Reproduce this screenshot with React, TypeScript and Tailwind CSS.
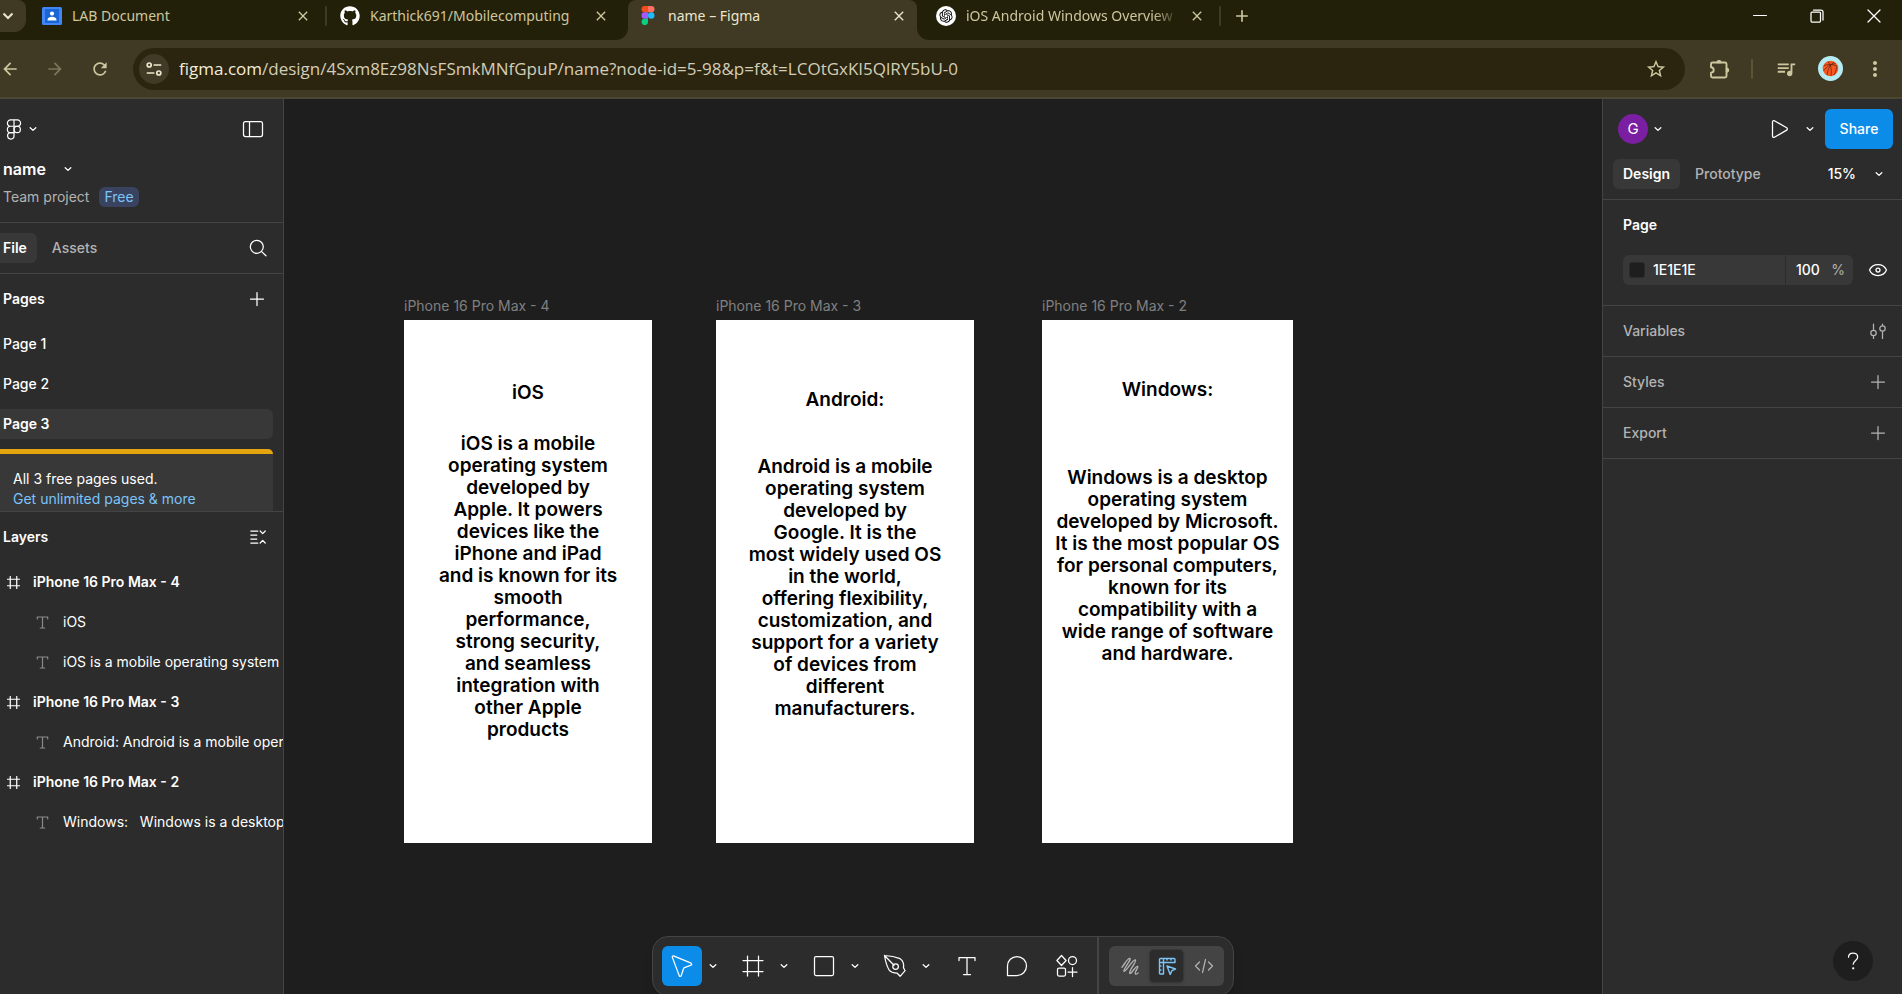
import type { ReactNode } from "react";
import {
  MdAdd,
  MdArrowBack,
  MdArrowForward,
  MdClose,
  MdMoreVert,
  MdQueueMusic,
  MdRefresh,
  MdStarBorder,
} from "react-icons/md";
import { FaGithub } from "react-icons/fa";
import { RiOpenaiFill } from "react-icons/ri";

/* ---------- icons ---------- */

function Icon({
  children,
  className = "size-6",
  box = 24,
}: {
  children: ReactNode;
  className?: string;
  box?: number;
}) {
  return (
    <svg
      viewBox={`0 0 ${box} ${box}`}
      className={`shrink-0 ${className}`}
      fill="none"
      stroke="currentColor"
      strokeWidth="1.25"
      strokeLinecap="round"
      strokeLinejoin="round"
      aria-hidden="true"
    >
      {children}
    </svg>
  );
}

const Chevron = () => (
  <Icon box={10} className="size-[10px]">
    <path d="M2.200 3.700 5 6.400l2.800-2.700" strokeWidth="1.3" />
  </Icon>
);

const Plus = () => (
  <Icon box={16} className="size-4">
    <path d="M8 1.5v13M1.5 8h13" />
  </Icon>
);

const TypeIcon = ({ className, weight = 1.25 }: { className: string; weight?: number }) => (
  <Icon box={20} className={className}>
    <path d="M2 4.5V1.5h16v3M10 1.5v17M6.5 18.5h7" strokeWidth={weight} />
  </Icon>
);

const HashFrame = ({ className }: { className: string }) => (
  <Icon box={20} className={className}>
    <path d="M5 .8v18.4M15 .8v18.4M.8 5h18.4M.8 15h18.4" strokeWidth="1.9" />
  </Icon>
);

const FigmaColor = () => (
  <svg viewBox="0 0 14 20" className="h-[19px] w-[14px]" aria-hidden="true">
    <path d="M3.5 0H7v6.6H3.5a3.3 3.3 0 0 1 0-6.6z" fill="#f24e1e" />
    <path d="M7 0h3.5a3.3 3.3 0 0 1 0 6.6H7z" fill="#ff7262" />
    <path d="M3.5 6.6H7v6.7H3.5a3.3 3.3 0 0 1 0-6.7z" fill="#a259ff" />
    <circle cx="10.4" cy="10" r="3.4" fill="#1abcfe" />
    <path d="M3.5 13.3H7v3.3a3.4 3.4 0 1 1-3.5-3.3z" fill="#0acf83" />
  </svg>
);

const FigmaOutline = () => (
  <svg
    viewBox="0 0 16 22"
    className="h-[21px] w-4"
    fill="none"
    stroke="currentColor"
    strokeWidth="1.25"
    aria-hidden="true"
  >
    <path d="M8 1H4.4a3.3 3.3 0 0 0 0 6.6H8zM8 1h3.6a3.3 3.3 0 0 1 0 6.6H8zM8 7.6H4.4a3.3 3.3 0 0 0 0 6.7H8z" />
    <circle cx="11.4" cy="10.9" r="3.3" />
    <path d="M8 14.3H4.4a3.35 3.35 0 1 0 3.6 3.3z" />
  </svg>
);

const ContactsIcon = () => (
  <svg viewBox="0 0 20 20" className="size-5" aria-hidden="true">
    <rect width="20" height="18" y="1" rx="1.5" fill="#4285f4" />
    <rect x="3" y="3" width="14" height="14" fill="#1a66d6" />
    <circle cx="10" cy="7.6" r="2.1" fill="#fff" />
    <path d="M5.6 14.4v-1c0-1.7 2.4-2.6 4.4-2.6s4.4.9 4.4 2.6v1z" fill="#fff" />
  </svg>
);

const OpenAiBadge = () => (
  <span className="flex size-5 items-center justify-center rounded-full bg-white text-black">
    <RiOpenaiFill className="size-4" />
  </span>
);

const SiteSettings = () => (
  <Icon box={16} className="size-4">
    <g strokeWidth="1.7">
      <circle cx="3.2" cy="4" r="2" />
      <path d="M8.2 4h6.4M1.4 12h6.4" />
      <circle cx="12.8" cy="12" r="2" />
    </g>
  </Icon>
);

const Puzzle = () => (
  <Icon box={22} className="size-[22px]">
    <path
      d="M3.500 4.500h12.500a1.500 1.500 0 0 1 1.500 1.500v12a1.500 1.500 0 0 1-1.500 1.500H3.500A1.500 1.500 0 0 1 2 18v-3.300c3.600-.2 3.600-5.200 0-5.400V6a1.500 1.500 0 0 1 1.500-1.500z"
      strokeWidth="1.9"
    />
    <path d="M8 4.500a2 2 0 0 1 4 0zM17.500 10a2 2 0 0 1 0 4z" fill="currentColor" />
  </Icon>
);

const Basketball = () => (
  <svg viewBox="0 0 25 25" className="size-[25px]" aria-hidden="true">
    <circle cx="12.500" cy="12.500" r="12.500" fill="#b5ecf3" />
    <circle cx="12.500" cy="12.500" r="7.800" fill="#f9571f" />
    <path
      d="M6 9.500c4.500-1.500 9-1.200 13 .5M10 5.500c3 3 4 9 3 14.500M5.500 15c3-4.500 7.500-7 12-7.500M9 19c.5-5.500 3-10 7-13M16 19c1.500-2.500 2.500-5.500 2.500-8.500"
      fill="none"
      stroke="#5a2413"
      strokeWidth=".7"
    />
  </svg>
);

/* ---------- browser chrome ---------- */

function Tab({
  icon,
  label,
  active = false,
  fade = false,
}: {
  icon: ReactNode;
  label: string;
  active?: boolean;
  fade?: boolean;
}) {
  return (
    <div
      className={`relative flex h-10 w-[289px] min-w-0 items-center gap-[10px] px-[10px] pb-[9px] ${
        active ? "rounded-t-lg bg-[#403a24] text-[#ece6cc]" : "text-[#cdc69f]"
      }`}
    >
      {active && (
        <>
          <svg viewBox="0 0 12 12" className="absolute right-full bottom-0 size-3 text-[#403a24]" aria-hidden="true">
            <path d="M12 0v12H0A12 12 0 0 0 12 0z" fill="currentColor" />
          </svg>
          <svg viewBox="0 0 12 12" className="absolute bottom-0 left-full size-3 text-[#403a24]" aria-hidden="true">
            <path d="M0 0v12h12A12 12 0 0 1 0 0z" fill="currentColor" />
          </svg>
        </>
      )}
      <span className="flex size-5 shrink-0 items-center justify-center">{icon}</span>
      <span
        className={`min-w-0 flex-1 overflow-hidden text-[14px] leading-5 whitespace-nowrap ${
          fade ? "[mask-image:linear-gradient(to_right,#000_88%,transparent)]" : ""
        }`}
      >
        {label}
      </span>
      <button aria-label={`Close ${label}`} className="shrink-0">
        <MdClose className="size-4" />
      </button>
    </div>
  );
}

const TabGap = ({ line = false }: { line?: boolean }) => (
  <span className="flex h-[31px] w-[9px] shrink-0 items-center justify-center">
    {line && <span className="h-5 w-[2px] rounded bg-[#403a24]" />}
  </span>
);

function TitleBar() {
  return (
    <div className="flex h-10 shrink-0 items-start bg-[#232009] font-['Noto_Sans',sans-serif]">
      <button
        aria-label="Search tabs"
        className="mr-[6px] flex h-8 w-[26px] shrink-0 items-center rounded-tr-lg rounded-br-xl bg-[#403a24] pl-[2px] text-[#ece6cc]"
      >
        <svg viewBox="0 0 12 12" className="size-3" fill="none" stroke="currentColor" strokeWidth="2" aria-hidden="true">
          <path d="M1.500 3.500 6 8l4.500-4.500" />
        </svg>
      </button>
      <Tab icon={<ContactsIcon />} label="LAB Document" />
      <TabGap line />
      <Tab icon={<FaGithub className="size-5 text-white" />} label="Karthick691/Mobilecomputing" />
      <TabGap />
      <Tab icon={<FigmaColor />} label="name – Figma" active />
      <TabGap />
      <Tab icon={<OpenAiBadge />} label="iOS Android Windows Overview" fade />
      <TabGap line />
      <button aria-label="New tab" className="ml-2 flex h-[31px] items-center text-[#cdc69f]">
        <MdAdd className="size-5" />
      </button>
      <div className="ml-auto flex h-[31px] shrink-0 items-center gap-[43px] pr-[21px] text-white">
        <button aria-label="Minimize">
          <Icon box={14} className="size-[14px]">
            <path d="M.5 6.500h13" strokeWidth="1" />
          </Icon>
        </button>
        <button aria-label="Restore">
          <Icon box={14} className="size-[14px]">
            <rect x="1" y="3" width="9.500" height="10" rx="1" />
            <path d="M3.500 1h7.500a2 2 0 0 1 2 2v8" />
          </Icon>
        </button>
        <button aria-label="Close window">
          <Icon box={14} className="size-[14px]">
            <path d="m1 1 12 12M13 1 1 13" />
          </Icon>
        </button>
      </div>
    </div>
  );
}

function AddressBar() {
  return (
    <div className="flex h-[59px] shrink-0 items-center border-b-2 border-[#4b4735] bg-[#403a24] pr-[15px] text-[#cdc69f]">
      <div className="flex shrink-0 gap-[25px]">
        <button aria-label="Back">
          <MdArrowBack className="size-5" />
        </button>
        <button aria-label="Forward" className="text-[#7d765a]" disabled>
          <MdArrowForward className="size-5" />
        </button>
        <button aria-label="Reload">
          <MdRefresh className="size-5" />
        </button>
      </div>
      <div className="ml-[23px] flex h-[42px] min-w-0 flex-1 items-center rounded-full bg-[#2b2510] pr-[18px] pl-[6px]">
        <button
          aria-label="Site information"
          className="flex size-[30px] shrink-0 items-center justify-center rounded-full bg-[#403a26] text-[#ece6cc]"
        >
          <SiteSettings />
        </button>
        <div className="ml-[10px] min-w-0 flex-1 truncate pt-px text-[17px] leading-6 text-[#d3cdb5]">
          <span className="text-[#f1edda]">figma.com</span>
          /design/4Sxm8Ez98NsFSmkMNfGpuP/name?node-id=5-98&amp;p=f&amp;t=LCOtGxKI5QlRY5bU-0
        </div>
        <button aria-label="Bookmark this tab">
          <MdStarBorder className="size-[22px]" />
        </button>
      </div>
      <button aria-label="Extensions" className="ml-6 shrink-0">
        <Puzzle />
      </button>
      <span className="ml-5 h-5 w-[2px] shrink-0 rounded bg-[#5b5436]" />
      <button aria-label="Media controls" className="ml-[22px] shrink-0">
        <MdQueueMusic className="size-[22px]" />
      </button>
      <button aria-label="Profile" className="ml-[21px] shrink-0">
        <Basketball />
      </button>
      <button aria-label="Browser menu" className="ml-5 shrink-0">
        <MdMoreVert className="size-6" />
      </button>
    </div>
  );
}

/* ---------- left panel ---------- */

const layers = [
  { kind: "frame", name: "iPhone 16 Pro Max - 4" },
  { kind: "text", name: "iOS" },
  { kind: "text", name: "iOS is a mobile operating system developed by Apple." },
  { kind: "frame", name: "iPhone 16 Pro Max - 3" },
  { kind: "text", name: "Android: Android is a mobile operating system" },
  { kind: "frame", name: "iPhone 16 Pro Max - 2" },
  { kind: "text", name: "Windows:   Windows is a desktop operating system" },
];

function LeftPanel() {
  return (
    <aside className="w-[284px] shrink-0 overflow-hidden border-r border-[#444444] bg-[#2c2c2c] text-[14px] leading-5 text-white">
      <header className="border-b border-[#444444] pt-[14px] pb-[15px] pl-[3px]">
        <div className="flex h-8 items-center pr-[19px] pl-[3px]">
          <button aria-label="Main menu" className="flex items-center gap-[6px]">
            <FigmaOutline />
            <Chevron />
          </button>
          <button aria-label="Minimize UI" className="ml-auto">
            <Icon box={22} className="size-[22px]">
              <rect x="1.500" y="3.500" width="19" height="15" rx="2" />
              <path d="M7.500 3.500v15" />
            </Icon>
          </button>
        </div>
        <button className="mt-2 flex h-8 items-center gap-[17px] text-[16px] font-semibold">
          name
          <Chevron />
        </button>
        <div className="mt-[2px] flex h-5 items-center gap-[10px] text-[#b3b3b3]">
          Team project
          <span className="rounded-[6px] bg-[#394360] px-[5px] text-[#7cc4f8]">Free</span>
        </div>
      </header>

      <div className="flex h-[51px] items-center border-b border-[#444444] pr-4">
        <button className="h-[30px] rounded-r-[6px] bg-[#383838] pr-[10px] pl-[3px] font-semibold">File</button>
        <button className="ml-[15px] font-medium text-[#b3b3b3]">Assets</button>
        <button aria-label="Find" className="ml-auto">
          <Icon box={18} className="size-[18px]">
            <circle cx="7.800" cy="7.800" r="6.500" />
            <path d="m12.600 12.600 4.400 4.200" />
          </Icon>
        </button>
      </div>

      <section className="border-b border-[#444444] pr-[10px]">
        <div className="flex h-[50px] items-center pr-2 pl-[3px]">
          <h2 className="font-semibold">Pages</h2>
          <button aria-label="Add new page" className="ml-auto">
            <Plus />
          </button>
        </div>
        <ul className="flex flex-col gap-[10px] pt-[5px]">
          {["Page 1", "Page 2", "Page 3"].map((page) => (
            <li
              key={page}
              className={`flex h-[30px] items-center pl-[3px] ${
                page === "Page 3" ? "rounded-r-[6px] bg-[#383838] font-semibold" : "font-medium"
              }`}
            >
              {page}
            </li>
          ))}
        </ul>
        <div className="mt-[10px] overflow-hidden rounded-tr-[5px] border-t-[5px] border-[#e5a50f] bg-[#383838] pt-[15px] pb-[2px] pl-[13px]">
          <p>All 3 free pages used.</p>
          <a href="#upgrade" className="block text-[#7cc4f8]">
            Get unlimited pages &amp; more
          </a>
        </div>
      </section>

      <section>
        <div className="flex h-[50px] items-center pr-[17px] pl-[3px]">
          <h2 className="font-semibold">Layers</h2>
          <button aria-label="Collapse layers" className="ml-auto">
            <Icon box={16} className="size-4">
              <path d="M.8 2h7M.8 6h6M.8 10h6M.8 14h7M10.200 2 12.700 4.600 15.200 2M10.200 14l2.500-2.600 2.500 2.600" />
            </Icon>
          </button>
        </div>
        <ul>
          {layers.map((layer) =>
            layer.kind === "frame" ? (
              <li key={layer.name} className="flex h-10 items-center gap-[13px] pl-[7px] font-semibold whitespace-pre">
                <HashFrame className="size-[13px]" />
                {layer.name}
              </li>
            ) : (
              <li key={layer.name} className="flex h-10 items-center gap-[14px] pl-[36px] whitespace-pre">
                <TypeIcon className="size-[13px] text-[#8c8c8c]" weight={1.8} />
                {layer.name}
              </li>
            ),
          )}
        </ul>
      </section>
    </aside>
  );
}

/* ---------- canvas ---------- */

function Artboard({
  name,
  title,
  lines,
  place,
  titleSpace,
  bodySpace,
}: {
  name: string;
  title: string;
  lines: string[];
  place: string;
  titleSpace: string;
  bodySpace: string;
}) {
  return (
    <figure className={`absolute top-[197px] ${place}`}>
      <figcaption className="h-6 text-[14px] leading-5 whitespace-nowrap text-[#808080]">{name}</figcaption>
      <div
        className={`h-[523px] bg-white text-center text-[19px] leading-[22px] font-semibold whitespace-nowrap text-black ${titleSpace}`}
      >
        <h3>{title}</h3>
        <p className={bodySpace}>
          {lines.map((line) => (
            <span key={line} className="block">
              {line}
            </span>
          ))}
        </p>
      </div>
    </figure>
  );
}

function Tool({
  label,
  menu = false,
  active = false,
  children,
}: {
  label: string;
  menu?: boolean;
  active?: boolean;
  children: ReactNode;
}) {
  return (
    <div className="flex items-center">
      <button
        aria-label={label}
        className={`flex size-10 items-center justify-center rounded-[6px] ${active ? "bg-[#0c8ce9]" : ""}`}
      >
        {children}
      </button>
      {menu && (
        <button aria-label={`${label} options`} className="flex h-10 w-[22px] items-center justify-center">
          <Chevron />
        </button>
      )}
    </div>
  );
}

function Toolbar() {
  return (
    <div className="absolute -bottom-[2px] left-1/2 flex h-[60px] -translate-x-1/2 items-center rounded-2xl border border-[#444444] bg-[#2c2c2c] px-[9px] text-white shadow-lg">
      <div className="flex gap-[9px]">
        <Tool label="Move" menu active>
          <Icon>
            <path d="M2.300 3.100c-.3-.8.4-1.500 1.200-1.200l17.600 7.300c.9.400.8 1.600 0 1.900l-6.600 2.500a1.500 1.500 0 0 0-.9.900l-2.400 7.300c-.3.900-1.500.9-1.900.1z" />
          </Icon>
        </Tool>
        <Tool label="Frame" menu>
          <Icon>
            <path d="M6.500 2v20M17.500 2v20M2 6.500h20M2 17.500h20" />
          </Icon>
        </Tool>
        <Tool label="Rectangle" menu>
          <Icon>
            <rect x="2.500" y="2.500" width="19" height="19" rx="1.500" />
          </Icon>
        </Tool>
        <Tool label="Pen" menu>
          <Icon>
            <path d="M1.500 1.500 11 11.300M1.500 1.500c1 6 2.300 10.500 4.500 14.300 1.500 2 5 3.200 8.200 3.400l2.900 3.100 5-5.600-1.600-3c.6-3.800-.8-7.200-3.400-9C12.500 2.800 7.500 1.800 1.500 1.500z" />
            <circle cx="12.600" cy="12.600" r="2.800" />
          </Icon>
        </Tool>
      </div>
      <div className="ml-[10px] flex gap-[10px]">
        <Tool label="Text">
          <TypeIcon className="size-5" />
        </Tool>
        <Tool label="Comment">
          <Icon>
            <path d="M2.500 21.500V12A9.500 9.500 0 1 1 12 21.500z" />
          </Icon>
        </Tool>
        <Tool label="Actions">
          <Icon>
            <path d="m6.500 1.500 4.600 5-4.600 5-4.600-5zM17.500 13.500v9M13 18h9" />
            <circle cx="17.500" cy="6.500" r="4" />
            <rect x="2.500" y="14" width="8" height="8" rx="1.500" />
          </Icon>
        </Tool>
      </div>
      <span className="mx-[10px] h-full w-[2px] bg-[#444444]" />
      <div className="flex h-10 w-[115px] items-center justify-between rounded-[6px] bg-[#444444] px-[3px] text-[#b3b3b3]">
        <button aria-label="Draw" className="flex h-[34px] w-[35px] items-center justify-center">
          <Icon box={20} className="size-[18px]">
            <path
              d="M1 11.500C4 8 7 1.500 9.800 1.600c2.200.8-6.500 10.400-6.600 14.200 2.500 1.600 9.500-13.500 12.800-12.600 2 1.700-7 11-6.400 14.800 2 1.800 6.400-8.500 8.900-7.600 1.300 1.300-3.700 5.700-2.500 8.300 1 .6 2.300-.2 3-1"
              strokeWidth="1.5"
            />
          </Icon>
        </button>
        <button
          aria-label="Design"
          className="flex h-[34px] w-[35px] items-center justify-center rounded-[5px] border border-[#383838] bg-[#2c2c2c] text-[#7cc4f8] shadow"
        >
          <Icon box={20} className="size-5">
            <path
              d="M6.500 18h-3a1 1 0 0 1-1-1v-13.500a1 1 0 0 1 1-1h13.500a1 1 0 0 1 1 1v3H6.500zM6.500 2.500v4h-4M10 2.500v1.500M14 2.500v1.500M2.500 10h1.500M2.500 14h1.500"
              strokeWidth="1.4"
            />
            <path d="m10 10 8.500 3-3.600 1.700-1.700 3.700z" strokeWidth="1.4" />
          </Icon>
        </button>
        <button aria-label="Dev Mode" className="flex h-[34px] w-[35px] items-center justify-center">
          <Icon box={20} className="size-5">
            <path d="M5.500 6 1.500 10l4 4M14.500 6l4 4-4 4M11.500 3.500l-3 13" />
          </Icon>
        </button>
      </div>
    </div>
  );
}

function Canvas() {
  return (
    <main className="relative min-w-0 flex-1 overflow-hidden bg-[#1e1e1e]">
      <Artboard
        name="iPhone 16 Pro Max - 4"
        title="iOS"
        place="left-[120px] w-[248px]"
        titleSpace="pt-[62px]"
        bodySpace="mt-[29px]"
        lines={[
          "iOS is a mobile",
          "operating system",
          "developed by",
          "Apple. It powers",
          "devices like the",
          "iPhone and iPad",
          "and is known for its",
          "smooth",
          "performance,",
          "strong security,",
          "and seamless",
          "integration with",
          "other Apple",
          "products",
        ]}
      />
      <Artboard
        name="iPhone 16 Pro Max - 3"
        title="Android:"
        place="left-[432px] w-[258px]"
        titleSpace="pt-[69px]"
        bodySpace="mt-[45px]"
        lines={[
          "Android is a mobile",
          "operating system",
          "developed by",
          "Google. It is the",
          "most widely used OS",
          "in the world,",
          "offering flexibility,",
          "customization, and",
          "support for a variety",
          "of devices from",
          "different",
          "manufacturers.",
        ]}
      />
      <Artboard
        name="iPhone 16 Pro Max - 2"
        title="Windows:"
        place="left-[758px] w-[251px]"
        titleSpace="pt-[59px]"
        bodySpace="mt-[66px]"
        lines={[
          "Windows is a desktop",
          "operating system",
          "developed by Microsoft.",
          "It is the most popular OS",
          "for personal computers,",
          "known for its",
          "compatibility with a",
          "wide range of software",
          "and hardware.",
        ]}
      />
      <Toolbar />
    </main>
  );
}

/* ---------- right panel ---------- */

function PanelRow({ label, children }: { label: string; children: ReactNode }) {
  return (
    <div className="flex h-[51px] items-center border-b border-[#444444] pr-4 pl-5 font-medium text-[#b3b3b3]">
      <h2>{label}</h2>
      <button aria-label={`Edit ${label}`} className="ml-auto">
        {children}
      </button>
    </div>
  );
}

function RightPanel() {
  return (
    <aside className="relative w-[300px] shrink-0 border-l border-[#444444] bg-[#2c2c2c] text-[14px] leading-5 text-white">
      <header className="border-b border-[#444444] py-[10px]">
        <div className="flex h-10 items-center pr-[9px] pl-[15px]">
          <button aria-label="Account" className="flex items-center gap-[5px]">
            <span className="flex size-[30px] items-center justify-center rounded-full bg-[#7b1fa2] text-[15px]">G</span>
            <Chevron />
          </button>
          <button aria-label="Present" className="ml-auto">
            <Icon box={20} className="size-5">
              <path d="M2.500 2.800c0-1 1-1.600 1.900-1.100l12.300 7.100c.9.500.9 1.800 0 2.300L4.400 18.300c-.9.500-1.900-.1-1.900-1.100z" />
            </Icon>
          </button>
          <button aria-label="Present options" className="ml-[15px]">
            <Chevron />
          </button>
          <button className="ml-[10px] h-10 w-[68px] rounded-[6px] bg-[#0c8ce9] font-medium">Share</button>
        </div>
        <div className="mt-[10px] flex h-[30px] items-center pr-[18px] pl-[10px]">
          <button className="h-[30px] rounded-[6px] bg-[#383838] px-[10px] font-semibold">Design</button>
          <button className="ml-[15px] font-medium text-[#b3b3b3]">Prototype</button>
          <button className="ml-auto flex items-center gap-[18px] font-medium">
            15%
            <Chevron />
          </button>
        </div>
      </header>

      <section className="border-b border-[#444444] pb-5">
        <h2 className="flex h-[50px] items-center pl-5 font-semibold">Page</h2>
        <div className="mt-[5px] flex h-[30px] items-center pr-[14px] pl-5">
          <div className="flex h-[30px] min-w-0 flex-1 items-center gap-px">
            <label className="flex h-full min-w-0 flex-1 items-center gap-2 rounded-l-[6px] bg-[#383838] pl-[6px]">
              <span className="size-4 shrink-0 rounded-[3px] border border-[#2a2a2a] bg-[#1e1e1e]" />
              <input
                aria-label="Page color"
                defaultValue="1E1E1E"
                className="w-full min-w-0 bg-transparent font-medium outline-none"
              />
            </label>
            <label className="flex h-full w-[67px] items-center rounded-r-[6px] bg-[#383838] pr-2 pl-[10px]">
              <input
                aria-label="Page opacity"
                defaultValue="100"
                className="w-full min-w-0 bg-transparent font-medium outline-none"
              />
              <span className="text-[#b3b3b3]">%</span>
            </label>
          </div>
          <button aria-label="Show in exports" className="ml-[15px]">
            <Icon box={20} className="size-5">
              <path d="M1.500 10C3 6.500 6.500 4.500 10 4.500S17 6.500 18.500 10C17 13.500 13.500 15.500 10 15.500S3 13.500 1.500 10z" />
              <circle cx="10" cy="10" r="2" />
            </Icon>
          </button>
        </div>
      </section>

      <PanelRow label="Variables">
        <Icon box={16} className="size-4">
          <path d="M3.500 1v6M3.500 13v2.500M12.500 1v1.500M12.500 8.500v7" />
          <circle cx="3.500" cy="10" r="2.700" />
          <circle cx="12.500" cy="5.500" r="2.700" />
        </Icon>
      </PanelRow>
      <PanelRow label="Styles">
        <Plus />
      </PanelRow>
      <PanelRow label="Export">
        <Plus />
      </PanelRow>

      <button
        aria-label="Help and resources"
        className="absolute right-[29px] bottom-[13px] flex size-10 items-center justify-center rounded-full bg-[#1e1e1e]"
      >
        <Icon box={20} className="size-5">
          <path d="M5.500 6.200C5.500 3.500 7.500 2 10 2s4.700 1.500 4.700 4c0 3.300-4.200 3.600-4.500 7.200" />
          <circle cx="10.200" cy="17.300" r=".5" fill="currentColor" />
        </Icon>
      </button>
    </aside>
  );
}

export default function App() {
  return (
    <div className="flex h-screen flex-col overflow-hidden bg-[#1e1e1e] font-['Open_Sans',sans-serif]">
      <TitleBar />
      <AddressBar />
      <div className="flex min-h-0 flex-1 font-['Inter',sans-serif]">
        <LeftPanel />
        <Canvas />
        <RightPanel />
      </div>
    </div>
  );
}
